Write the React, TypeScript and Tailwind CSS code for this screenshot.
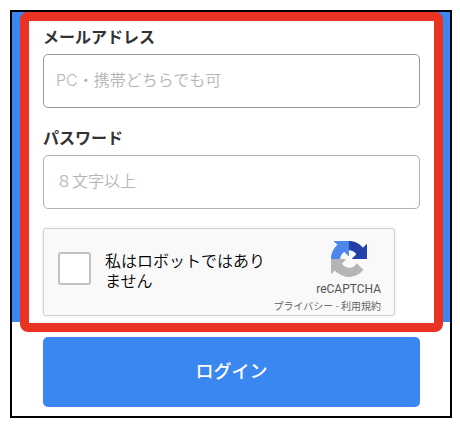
import React from 'react';

type FieldProps = {
  id: string;
  label: string;
  type: string;
  placeholder: string;
  borderClass: string;
};

function Field({ id, label, type, placeholder, borderClass }: FieldProps) {
  return (
    <div className="flex flex-col gap-1">
      <label htmlFor={id} className="text-base leading-6 font-bold text-[#333333]">
        {label}
      </label>
      <input
        id={id}
        type={type}
        placeholder={placeholder}
        className={`h-[54px] w-full rounded-[5px] border bg-white px-3 pb-0.5 font-['Inter','Noto_Sans_CJK_JP',sans-serif] text-base font-[350] text-[#333333] placeholder:text-[#b5b5b5] ${borderClass}`}
      />
    </div>
  );
}

function RecaptchaLogo() {
  return (
    <svg viewBox="0 0 64 64" className="h-9 w-9" aria-hidden="true">
      <path
        fill="#2340a8"
        d="M64 31.955l-.033-1.37V4.687l-7.16 7.16C50.948 4.674 42.033.093 32.05.093c-10.4 0-19.622 4.96-25.458 12.64l11.736 11.86a15.55 15.55 0 0 1 4.754-5.334c2.05-1.6 4.952-2.906 8.968-2.906.485 0 .86.057 1.135.163 4.976.393 9.288 3.14 11.828 7.124l-8.307 8.307L64 31.953"
      />
      <path
        fill="#4c87ec"
        d="M31.862.094l-1.37.033H4.594l7.16 7.16C4.58 13.147 0 22.06 0 32.046c0 10.4 4.96 19.622 12.64 25.458L24.5 45.768a15.55 15.55 0 0 1-5.334-4.754c-1.6-2.05-2.906-4.952-2.906-8.968 0-.485.057-.86.163-1.135.393-4.976 3.14-9.288 7.124-11.828l8.307 8.307L31.86.095"
      />
      <path
        fill="#b5b5b5"
        d="M.001 32.045l.033 1.37v25.898l7.16-7.16c5.86 7.173 14.774 11.754 24.76 11.754 10.4 0 19.622-4.96 25.458-12.64l-11.736-11.86a15.55 15.55 0 0 1-4.754 5.334c-2.05 1.6-4.952 2.906-8.968 2.906-.485 0-.86-.057-1.135-.163-4.976-.393-9.288-3.14-11.828-7.124l8.307-8.307c-10.522.04-22.4.066-27.295-.005"
      />
    </svg>
  );
}

function Recaptcha() {
  return (
    <div className="mr-[25px] flex h-[88px] justify-between rounded-[3px] border border-[#d3d3d3] bg-[#f9f9f9] pr-[13px] pl-[14px] shadow-[0_0_3px_rgba(0,0,0,0.12)]">
      <div className="flex items-center gap-[14px] pb-[7px]">
        <input
          id="robot"
          type="checkbox"
          className="h-[33px] w-[33px] shrink-0 appearance-none rounded-[3px] border-2 border-[#c1c1c1] bg-white checked:bg-[#4285f4]"
        />
        <label htmlFor="robot" className="w-[165px] pt-[7px] text-base leading-5 font-[350] text-black">
          私はロボットではありません
        </label>
      </div>
      <div className="-ml-14 flex flex-col items-end pt-3">
        <div className="flex flex-col items-center">
          <RecaptchaLogo />
          <p className="mt-1 text-xs leading-4 text-[#555555]">reCAPTCHA</p>
        </div>
        <p className="mt-1 text-[10px] leading-3 font-[350] whitespace-nowrap text-[#555555]">
          <a href="#privacy">プライバシー</a> - <a href="#terms">利用規約</a>
        </p>
      </div>
    </div>
  );
}

export default function App() {
  return (
    <main className="bg-white pt-[10px] pr-2 pb-[10px] pl-[10px] font-['Roboto','Noto_Sans_CJK_JP',sans-serif]">
      <form className="border-2 border-black bg-white" onSubmit={(e) => e.preventDefault()}>
        <section className="flex flex-col bg-[#3a87f2] pr-[7px] pl-2">
          <div className="-mb-[10px] flex flex-col gap-[19px] rounded-lg border-[9px] border-[#ea3323] bg-white px-[14px] pt-[5px] pb-[7px]">
            <Field
              id="email"
              label="メールアドレス"
              type="email"
              placeholder="PC・携帯どちらでも可"
              borderClass="border-[#999999]"
            />
            <Field
              id="password"
              label="パスワード"
              type="password"
              placeholder="８文字以上"
              borderClass="border-[#b0b0b0]"
            />
            <Recaptcha />
          </div>
        </section>
        <div className="flex pt-[15px] pr-[30px] pb-[9px] pl-[31px]">
          <button
            type="submit"
            className="h-[70px] w-full rounded-[5px] bg-[#3a87f2] text-lg font-medium text-white"
          >
            ログイン
          </button>
        </div>
      </form>
    </main>
  );
}
